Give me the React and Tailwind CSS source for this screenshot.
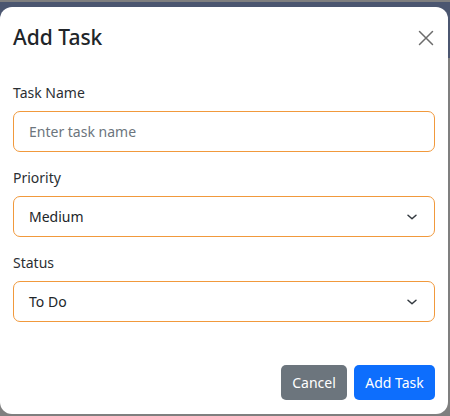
import React from "react";

function Chevron() {
  return (
    <svg width="12" height="8" viewBox="0 0 12 8" fill="none" className="shrink-0">
      <path d="M2 2.2 L6 5.8 L10 2.2" stroke="#343a40" strokeWidth="1.5" strokeLinecap="round" strokeLinejoin="round" />
    </svg>
  );
}

function Field({ label, children }) {
  return (
    <div className="flex flex-col">
      <div className="text-[14px] leading-[21px] text-[#2b2f33] mb-[8px]">{label}</div>
      {children}
    </div>
  );
}

function SelectBox({ value }) {
  return (
    <div className="h-[41px] rounded-[7px] border border-[#f1993c] flex items-center justify-between pl-[15px] pr-[16px] text-[14px] text-[#212529]">
      <span>{value}</span>
      <Chevron />
    </div>
  );
}

export default function App() {
  return (
    <div
      className="relative w-[450px] h-[416px] bg-[#7f7f7f] overflow-hidden pt-[7px]"
      style={{ fontFamily: '"Noto Sans", "Open Sans", sans-serif' }}
    >
      <div className="absolute left-0 right-0 top-[2px] h-[56px] bg-[#4b5670]" />
      <div className="relative w-[448px] h-[407px] bg-white rounded-[12px] flex flex-col px-[13px] pt-[17px] pb-[14px]">
        <div className="flex items-center justify-between h-[27px]">
          <div className="text-[21px] leading-[27px] text-[#212529] font-medium">Add Task</div>
          <svg width="16" height="16" viewBox="0 0 16 16" className="mr-[1px]">
            <path d="M1.5 1.5 L14.5 14.5 M14.5 1.5 L1.5 14.5" stroke="#6c6c6c" strokeWidth="1.5" strokeLinecap="round" />
          </svg>
        </div>
        <div className="flex flex-col gap-[15px] mt-[31px]">
          <Field label="Task Name">
            <div className="h-[41px] rounded-[7px] border border-[#f1993c] flex items-center pl-[15px] text-[14px] text-[#6c757d]">
              Enter task name
            </div>
          </Field>
          <Field label="Priority">
            <SelectBox value="Medium" />
          </Field>
          <Field label="Status">
            <SelectBox value="To Do" />
          </Field>
        </div>
        <div className="mt-auto flex justify-end gap-[7px]">
          <button className="h-[35px] w-[66px] rounded-[5px] bg-[#6c757d] text-white text-[14px]">Cancel</button>
          <button className="h-[35px] w-[81px] rounded-[5px] bg-[#0d6efd] text-white text-[14px]">Add Task</button>
        </div>
      </div>
    </div>
  );
}
